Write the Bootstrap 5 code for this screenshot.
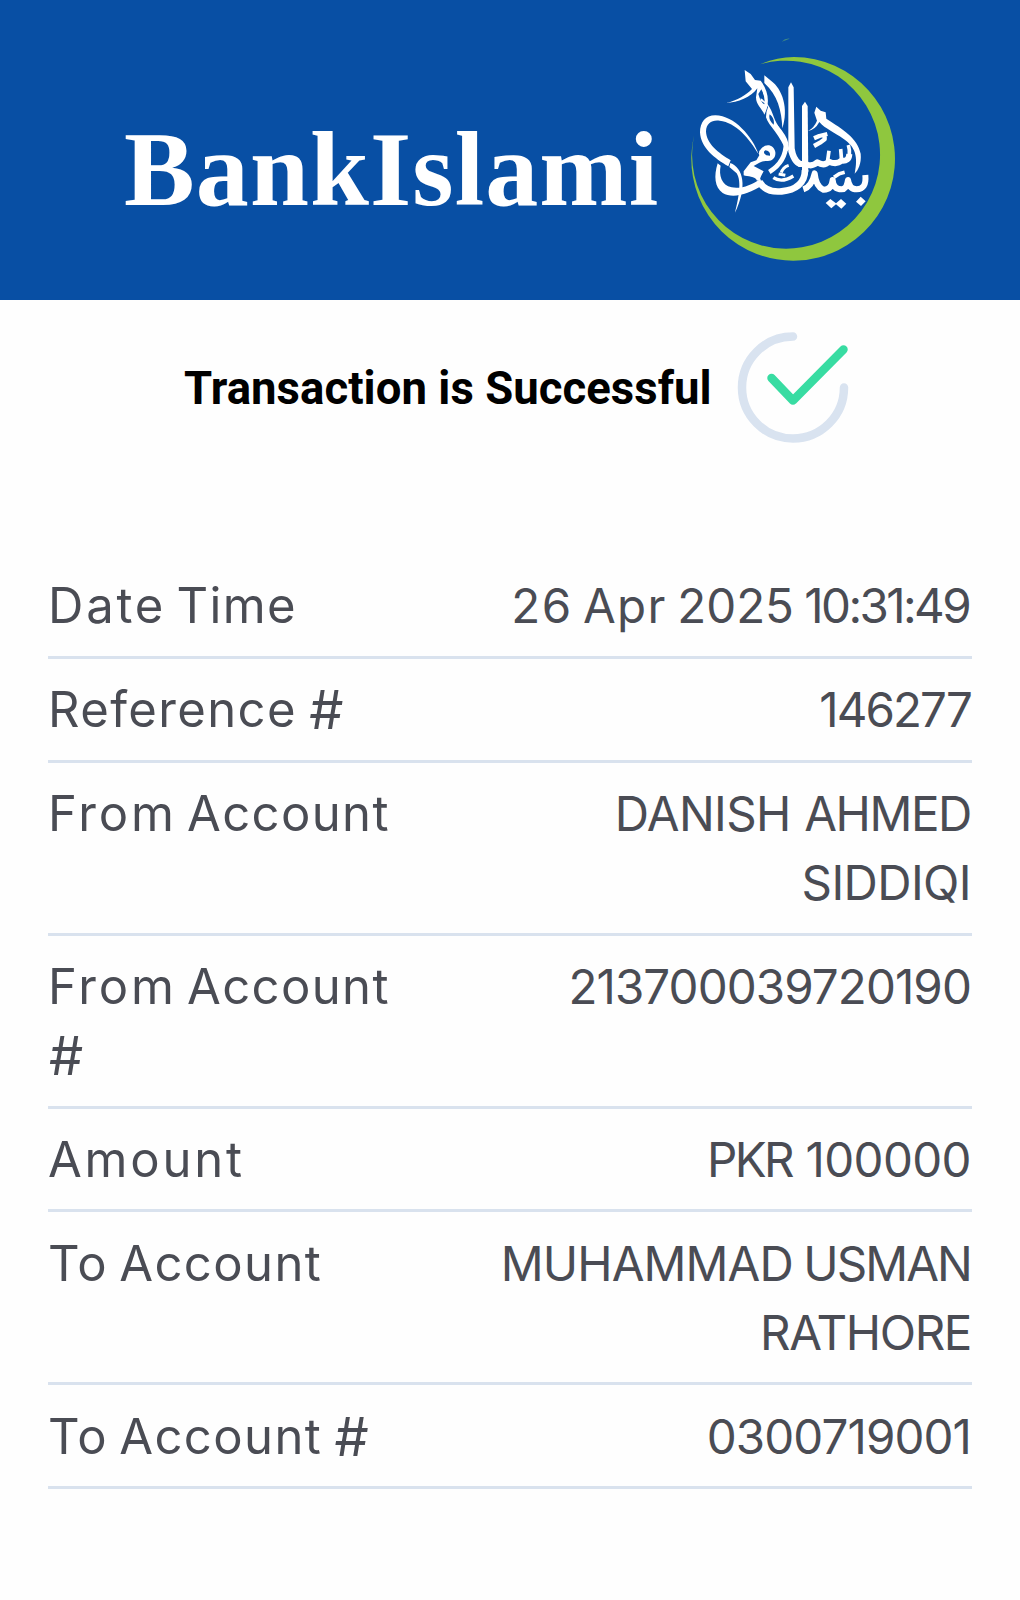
<!DOCTYPE html>
<html lang="en">
<head>
<meta charset="utf-8">
<meta name="viewport" content="width=device-width, initial-scale=1">
<title>BankIslami</title>
<link href="https://cdn.jsdelivr.net/npm/bootstrap@5.3.0/dist/css/bootstrap.min.css" rel="stylesheet">
<style>
body{background:#fefefe;color:#4a4c54;font-family:Inter,"Open Sans",sans-serif}
.bank-header{height:300px;background:#084fa4;padding:30px 110px 0 124px}
.bank-name{font:700 106px/120px "Liberation Serif",serif;letter-spacing:1.1px;color:#fff;padding-top:80px}
.bank-logo{width:230px;height:240px}
.status-bar{padding:32px 171px 0 184px}
.status-title{font:700 45.5px/54px Roboto,sans-serif;letter-spacing:.04px;color:#000;padding-top:2px}
.status-icon{width:112px;height:112px}
.receipt{margin:111px 48px 0;font-size:47.5px;line-height:69px}
.receipt-row{border-bottom:3px solid #d9e2ee;padding:16.3px 0 15.6px}
.receipt-row dt{font-size:49px;font-weight:400;word-spacing:-2.5px}
.receipt-row dd{margin:0;padding-right:1px}
.receipt-row dd.pe-date{padding-right:3px}
.hash{font-size:54px;line-height:0;letter-spacing:0;vertical-align:-2px;margin-left:1px}
.receipt-row dt.ws-tight{word-spacing:-3.5px}
.ws-date{word-spacing:-3px}
.ls-a{letter-spacing:2.8px}
.ls-b{letter-spacing:2.8px}
.ls-c{letter-spacing:1.4px}
.ls-d{letter-spacing:1.4px}
.ls-e{letter-spacing:-.6px}
.ls-f{letter-spacing:-.9px}
.ls-g{letter-spacing:-1.9px}
.ls-h{letter-spacing:-2.6px}
.ls-i{letter-spacing:-1.4px}
</style>
</head>
<body>
<header class="bank-header d-flex justify-content-between align-items-start">
  <div class="bank-name">BankIslami</div>
  <svg class="bank-logo flex-shrink-0" viewBox="0 0 690 720" aria-hidden="true">
    <path fill="#8fc73e" d="M240 103Q288 82 342 81A305.500 305.500 0 1 1 42.400 315A282 282 0 1 0 240 103Z"/>
    <path fill="#3f8a86" d="M305 35Q316 24 329 26Q318 30 305 35Z"/>
    <g fill="#fff">
      <path d="M236 373C219 322 163 256 106 256C76 256 60 278 60 307C62 352 103 385 145 409L152 391C116 369 79 342 78 304C79 279 96 269 119 272C168 278 208 325 236 373Z"/>
      <path d="M113 400C101 438 104 472 128 489C158 507 205 493 247 466L241 446C216 465 181 478 155 472C124 466 116 434 122 407Z"/>
      <path d="M151 399C190 414 203 470 165 548C175 508 186 455 170 430L148 411Z"/>
      <path d="M191 424L212 397L229 391L238 376Q233 365 246 353C263 338 282 347 286 366C288 383 277 394 262 393C247 391 239 398 221 408L251 424Q240 443 240 449L231 452C226 438 202 440 191 436ZM256 361Q246 367 259 376L270 377Q272 363 256 361Z" fill-rule="evenodd"/>
      <path d="M325 172L333 157L341 172L344 355Q349 385 363 393V411Q338 410 325 365Z"/>
      <path d="M366 228L375 215L383 228L385 425L366 437Z"/>
      <path d="M194 120L212 132L225 150L242 152C267 184 270 223 253 254C247 236 228 226 228 202L232 175C213 202 174 218 138 219C173 211 199 195 216 177L197 154ZM235 192Q242 217 253 223Q257 202 244 178Z" fill-rule="evenodd"/>
      <path d="M253 136L273 152C307 176 327 236 307 295C305 242 293 195 253 159Z"/>
      <path d="M242 205C275 224 276 253 290 280C305 307 321 326 328 357L319 367C303 317 265 287 258 262Q258 245 264 231Q257 219 242 213ZM269 253Q264 269 281 284Q285 266 269 253Z" fill-rule="evenodd"/>
      <path d="M409 230L422 242L437 247L439 266C489 298 533 325 542 371C545 401 534 421 524 431C535 379 526 351 491 327C463 306 436 297 418 276Q405 300 384 303Q402 294 411 272L403 248Z"/>
      <path d="M437 519L451 507L468 520L483 507L499 521L484 536L468 523L454 535ZM528 515L542 500L557 514L543 528Z"/>
    </g>
    <g fill="none" stroke="#fff" stroke-linejoin="round">
      <path stroke-width="20" d="M238 455C252 480 275 487 305 484C345 480 375 462 375 420"/>
      <path stroke-width="14" d="M268 426Q318 395 318 340Q314 320 285 287"/>
      <path stroke-width="10" d="M280 443Q305 460 340 438"/>
      <path stroke-width="9" d="M296 432L316 436M304 428Q308 412 326 406"/>
      <path stroke-width="18" d="M355 402H378Q395 412 412 397Q432 410 447 395Q470 405 484 392Q507 395 508 372"/>
      <path stroke-width="11" d="M442 398L447 362M485 395L482 357M508 378Q510 360 505 345"/>
      <path stroke-width="13" d="M402 325L418 318L442 312M402 348L420 338L434 328V314"/>
      <path stroke-width="18" d="M370 478Q395 470 404 430Q408 470 430 479Q455 480 458 450Q460 478 485 478Q500 478 504 450Q508 478 530 478Q560 478 556 435"/>
      <path stroke-width="11" d="M462 442L478 431L494 427"/>
    </g>
  </svg>
</header>
<main>
  <section class="status-bar d-flex justify-content-between align-items-center">
    <h1 class="status-title text-nowrap mb-0">Transaction is Successful</h1>
    <svg class="status-icon flex-shrink-0" viewBox="0 0 112 112" fill="none" stroke-linecap="round" stroke-linejoin="round" aria-hidden="true">
      <path d="M56 4.500A51 51 0 1 0 107 55.500" stroke="#d9e3f0" stroke-width="8.500"/>
      <path d="M34.500 46L56 68.500L106.500 17.500" stroke="#38dca2" stroke-width="8.500"/>
    </svg>
  </section>
  <dl class="receipt">
    <div class="row g-0 receipt-row">
      <dt class="col-5 pe-2 ws-tight"><span class="ls-a">Date</span> <span class="ls-c">Time</span></dt>
      <dd class="col-7 ps-3 text-end ws-date pe-date"><span class="ls-d">26</span> <span class="ls-d">Apr</span> <span>2025</span> <span class="ls-h">10:31:49</span></dd>
    </div>
    <div class="row g-0 receipt-row">
      <dt class="col-5 pe-2"><span class="ls-c">Reference</span> <span class="hash">#</span></dt>
      <dd class="col-7 ps-3 text-end"><span class="ls-g">146277</span></dd>
    </div>
    <div class="row g-0 receipt-row">
      <dt class="col-5 pe-2 ws-tight"><span class="ls-a">From</span> <span class="ls-c">Account</span></dt>
      <dd class="col-7 ps-3 text-end"><span class="ls-e">DANISH</span> <span class="ls-i">AHMED</span> <span class="ls-e">SIDDIQI</span></dd>
    </div>
    <div class="row g-0 receipt-row">
      <dt class="col-5 pe-2 ws-tight"><span class="ls-a">From</span> <span class="ls-c">Account</span> <span class="hash">#</span></dt>
      <dd class="col-7 ps-3 text-end"><span class="ls-f">213700039720190</span></dd>
    </div>
    <div class="row g-0 receipt-row">
      <dt class="col-5 pe-2"><span class="ls-b">Amount</span></dt>
      <dd class="col-7 ps-3 text-end"><span class="ls-h">PKR</span> <span class="ls-e">100000</span></dd>
    </div>
    <div class="row g-0 receipt-row">
      <dt class="col-5 pe-2"><span class="ls-c">To</span> <span class="ls-c">Account</span></dt>
      <dd class="col-7 ps-3 text-end ws-date"><span class="ls-f">MUHAMMAD</span> <span class="ls-g">USMAN</span> <span class="ls-i">RATHORE</span></dd>
    </div>
    <div class="row g-0 receipt-row">
      <dt class="col-5 pe-2"><span class="ls-c">To</span> <span class="ls-c">Account</span> <span class="hash">#</span></dt>
      <dd class="col-7 ps-3 text-end"><span class="ls-f">0300719001</span></dd>
    </div>
  </dl>
</main>
<script src="https://cdn.jsdelivr.net/npm/bootstrap@5.3.0/dist/js/bootstrap.bundle.min.js"></script>
</body>
</html>
